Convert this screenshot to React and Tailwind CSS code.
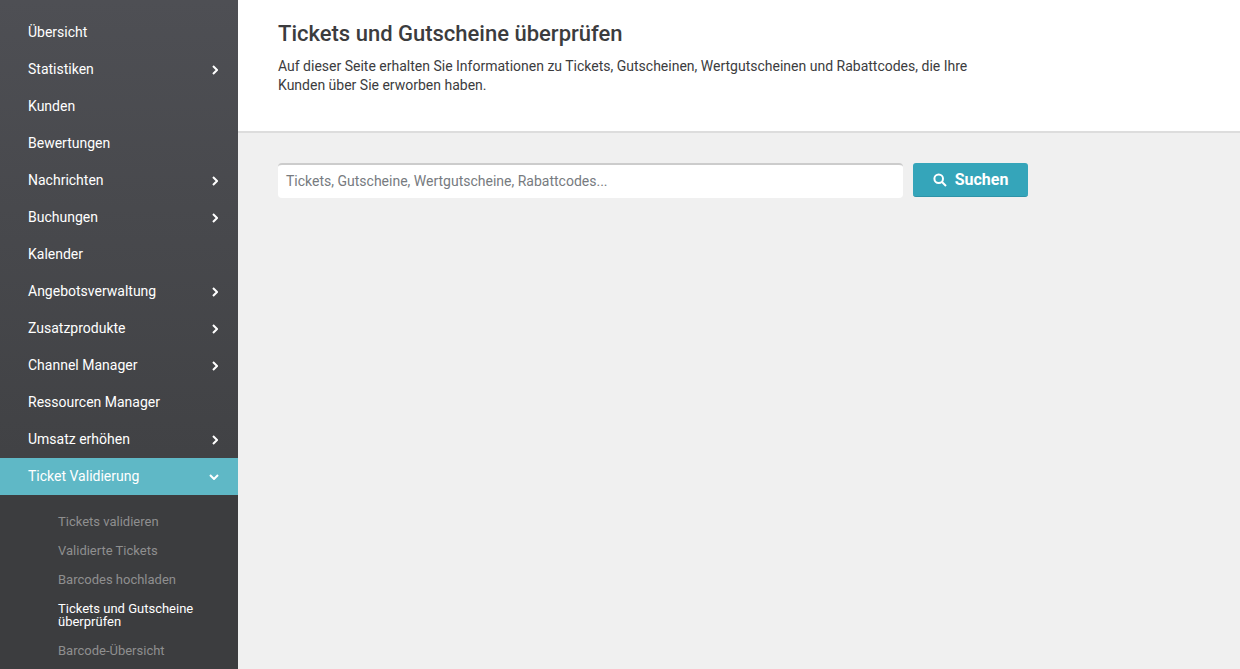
import React from "react";

const Right = () => (
  <svg width="6" height="10" viewBox="0 0 6 10" fill="none" stroke="white" strokeWidth="2" className="shrink-0">
    <path d="M1 1l4 4-4 4" />
  </svg>
);
const Down = () => (
  <svg width="10" height="6" viewBox="0 0 10 6" fill="none" stroke="white" strokeWidth="2" className="shrink-0">
    <path d="M1 1l4 4 4-4" />
  </svg>
);

const items = [
  ["Übersicht", false],
  ["Statistiken", true],
  ["Kunden", false],
  ["Bewertungen", false],
  ["Nachrichten", true],
  ["Buchungen", true],
  ["Kalender", false],
  ["Angebotsverwaltung", true],
  ["Zusatzprodukte", true],
  ["Channel Manager", true],
  ["Ressourcen Manager", false],
  ["Umsatz erhöhen", true],
];

const subs = [
  ["Tickets validieren", false],
  ["Validierte Tickets", false],
  ["Barcodes hochladen", false],
  ["Tickets und Gutscheine überprüfen", true],
  ["Barcode-Übersicht", false],
];

export default function App() {
  return (
    <div className="flex h-[669px] w-[1240px] overflow-hidden bg-[#f0f0f0] font-['Roboto',sans-serif]">
      <aside className="flex w-[238px] shrink-0 flex-col bg-gradient-to-b from-[#4e4f54] to-[#3b3c3e] pt-[14px]">
        {items.map(([label, arrow]) => (
          <div key={label} className="flex h-[37px] items-center justify-between pl-[28px] pr-[20px] text-[14px] text-white">
            <span>{label}</span>
            {arrow && <Right />}
          </div>
        ))}
        <div className="flex h-[37px] items-center justify-between bg-[#5fb8c6] pl-[28px] pr-[19px] text-[14px] text-white">
          <span>Ticket Validierung</span>
          <Down />
        </div>
        <div className="flex-1 bg-[#3c3d3f] pt-[12px]">
          {subs.map(([label, active]) => (
            <div
              key={label}
              className={`py-[8px] pl-[58px] pr-[30px] text-[13px] leading-[13px] ${active ? "text-white" : "text-[#8f8f8f]"}`}
            >
              {label}
            </div>
          ))}
        </div>
      </aside>
      <main className="min-w-0 flex-1">
        <header className="h-[133px] border-b-2 border-[#dddddd] bg-white pl-[40px] pt-[20px]">
          <h1 className="text-[22px] font-medium leading-[28px] text-[#3c3c3e]">Tickets und Gutscheine überprüfen</h1>
          <p className="mt-[9px] w-[730px] text-[14px] leading-[19px] text-[#3c3c3e]">
            Auf dieser Seite erhalten Sie Informationen zu Tickets, Gutscheinen, Wertgutscheinen und Rabattcodes, die Ihre Kunden über Sie erworben haben.
          </p>
        </header>
        <div className="flex items-start gap-[10px] pl-[40px] pt-[30px]">
          <div className="flex h-[35px] w-[625px] items-center rounded-[4px] border-t-2 border-[#cccccc] bg-white px-[8px] text-[14px] text-[#777b80]">
            Tickets, Gutscheine, Wertgutscheine, Rabattcodes...
          </div>
          <button className="flex h-[34px] w-[115px] items-center justify-center gap-[8px] rounded-[3px] border-b border-[#2e93a8] bg-[#35a5ba] text-[16px] font-bold text-white">
            <svg width="14" height="14" viewBox="0 0 14 14" fill="none" stroke="white" strokeWidth="2">
              <circle cx="5.7" cy="5.7" r="4.3" />
              <path d="M9 9l4 4" />
            </svg>
            Suchen
          </button>
        </div>
      </main>
    </div>
  );
}
